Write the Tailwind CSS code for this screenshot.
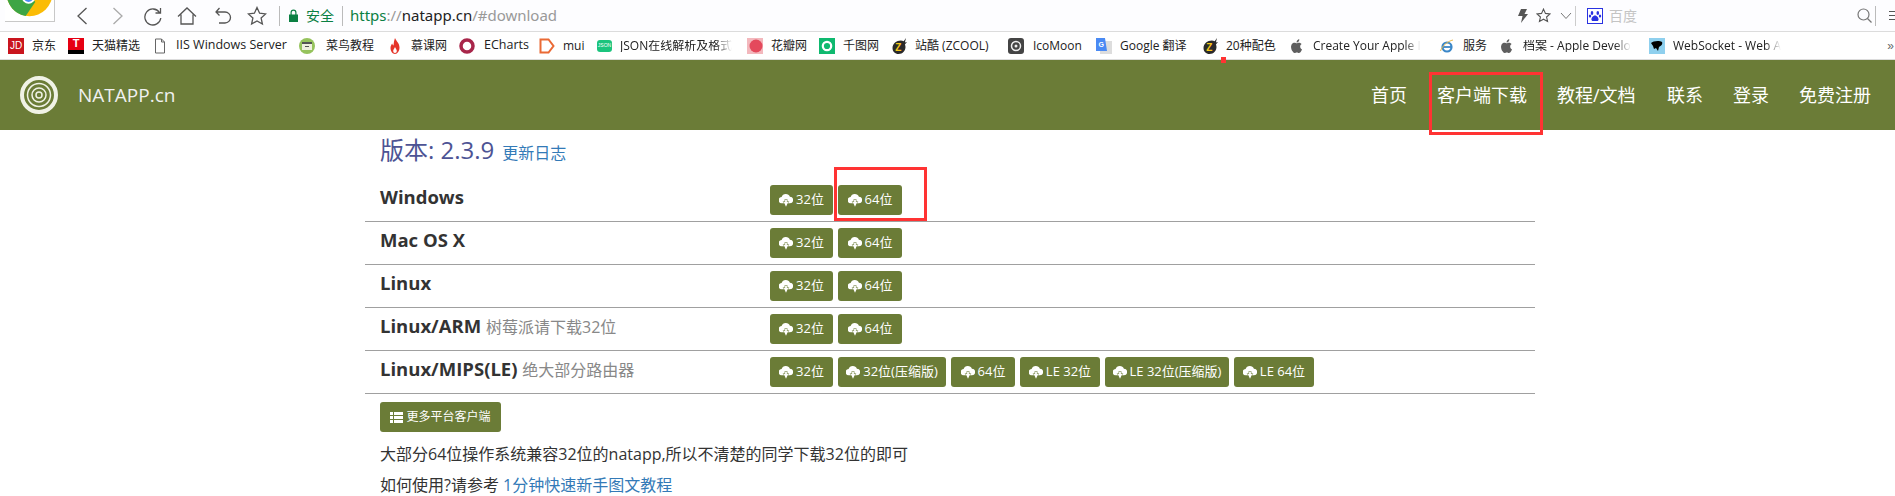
<!DOCTYPE html>
<html lang="zh-CN">
<head>
<meta charset="utf-8">
<title>NATAPP.cn</title>
<script src="https://cdn.jsdelivr.net/npm/@tailwindcss/browser@4"></script>
</head>
<body class="relative h-[496px] w-[1895px] overflow-hidden bg-white font-['Open_Sans','Noto_Sans_CJK_SC',sans-serif] text-[#333]">
<svg class="hidden">
  <symbol id="cloud" viewBox="0 0 14 14">
    <path fill="#fff" d="M3 10.200A3.100 3.100 0 0 1 2.600 4 4.400 4.400 0 0 1 10.900 3.800 3.200 3.200 0 0 1 11 10.200Z"/>
    <path fill="#6b7c37" d="M5.600 6.200h2.800v2.400h2L7 12 3.600 8.600h2Z"/>
    <path fill="#fff" d="M6.100 6.800h1.800v2.300h1.300L7 13.800 4.800 9.100h1.300Z"/>
  </symbol>
  <symbol id="apple" viewBox="0 0 16 16">
    <path fill="#5f5f5f" d="M11.200 8.400c0-1.600 1.300-2.300 1.400-2.400-.8-1.100-1.900-1.300-2.400-1.300-1-.1-2 .6-2.500.6s-1.300-.6-2.200-.6C4.300 4.700 3.200 5.400 2.600 6.400c-1.200 2.100-.3 5.200.9 6.900.6.800 1.200 1.700 2.100 1.700s1.200-.5 2.200-.5 1.300.5 2.200.5 1.500-.8 2.100-1.700c.7-1 .9-1.900.9-2-.1 0-1.800-.7-1.800-2.400ZM9.600 3.500c.5-.6.800-1.400.7-2.200-.7 0-1.500.5-2 1-.4.500-.8 1.300-.7 2.100.8.100 1.500-.4 2-.9Z"/>
  </symbol>
  <symbol id="zcool" viewBox="0 0 16 16">
    <path fill="#2a2a2a" d="M15 0 12.700 3.200C11.800 2.700 10.800 2.500 9.800 2.500 5.500 2.500 1.500 5.500 1.500 10c0 3.500 2.500 6 6 6 4.500 0 7-3.500 7-7 0-1-.2-1.800-.6-2.600L16 4l-2.100.6Z"/>
    <text x="4.300" y="13" font-size="10" font-weight="700" fill="#f5c518" font-family="Liberation Sans, sans-serif">Z</text>
  </symbol>
</svg>

<!-- browser toolbar -->
<div class="flex h-[32px] items-center border-b border-[#dcdcdc] bg-[#fdfdff]">
  <svg class="ml-[5px] h-[22px] w-[50px] shrink-0 self-start border-b border-r border-[#c8c8c8] bg-white" viewBox="0 0 50 22">
    <circle cx="25" cy="-7" r="24" fill="#fbbc05"/>
    <path fill="#3da544" d="M25-7 1-7A24 24 0 0 0 21 16.700L31 2Z"/>
    <circle cx="24" cy="-3" r="7" fill="#fff"/>
    <circle cx="24" cy="-3" r="5" fill="#4a8af4"/>
  </svg>
  <svg class="ml-[21px] h-[20px] w-[12px]" viewBox="0 0 12 20" fill="none" stroke="#555" stroke-width="1.300"><path d="M10.500 2 2 10l8.500 8"/></svg>
  <svg class="ml-[24px] h-[20px] w-[12px]" viewBox="0 0 12 20" fill="none" stroke="#aaa" stroke-width="1.300"><path d="M1.500 2 10 10l-8.500 8"/></svg>
  <svg class="ml-[19px] h-[20px] w-[20px]" viewBox="0 0 20 20" fill="none" stroke="#555" stroke-width="1.300"><path d="M16.500 6.500A8 8 0 1 0 17.800 12M17.500 2v5h-5"/></svg>
  <svg class="ml-[14px] h-[20px] w-[20px]" viewBox="0 0 20 20" fill="none" stroke="#555" stroke-width="1.300"><path d="M1 10.500 10 2l9 8.500M4 8.500V18h12V8.500"/></svg>
  <svg class="ml-[17px] h-[20px] w-[18px]" viewBox="0 0 18 20" fill="none" stroke="#555" stroke-width="1.300"><path d="M5.500 2 2 6l3.500 3.500M2 6h9a5.500 5.500 0 0 1 0 11H5"/></svg>
  <svg class="ml-[15px] h-[20px] w-[20px]" viewBox="0 0 20 20" fill="none" stroke="#555" stroke-width="1.300"><path d="m10 1.500 2.600 5.700 6.100.7-4.600 4.100 1.300 6L10 15l-5.400 3 1.300-6-4.600-4.100 6.100-.7Z"/></svg>
  <div class="ml-[12px] h-[20px] w-px bg-[#bbb]"></div>
  <svg class="ml-[9px] h-[13px] w-[9px]" viewBox="0 0 9 13"><path fill="#0b8043" d="M0 5.500h9V13H0ZM1.500 5.500V3.500a3 3 0 0 1 6 0v2H6.300V3.500a1.800 1.800 0 0 0-3.600 0v2Z"/></svg>
  <span class="ml-[8px] text-[14px] text-[#0b8043]">安全</span>
  <div class="ml-[8px] h-[20px] w-px bg-[#bbb]"></div>
  <span class="ml-[7px] font-['Noto_Sans',sans-serif] text-[15px] text-[#999]"><span class="text-[#0b8043]">https</span>://<span class="text-[#222]">natapp.cn</span>/#download</span>
  <svg class="ml-auto h-[14px] w-[10px]" viewBox="0 0 10 14"><path fill="#555" d="M3 0h6L6.500 5H10L3 14l1.500-7H0Z"/></svg>
  <svg class="ml-[8px] h-[15px] w-[15px]" viewBox="0 0 20 20" fill="none" stroke="#555" stroke-width="1.500"><path d="m10 1.500 2.600 5.700 6.100.7-4.600 4.100 1.300 6L10 15l-5.400 3 1.300-6-4.600-4.100 6.100-.7Z"/></svg>
  <svg class="ml-[9px] h-[8px] w-[12px]" viewBox="0 0 12 8" fill="none" stroke="#777"><path d="m1 1 5 5.500L11 1"/></svg>
  <div class="ml-[3px] h-[20px] w-px bg-[#ccc]"></div>
  <svg class="ml-[11px] h-[16px] w-[16px]" viewBox="0 0 16 16"><rect x=".5" y=".5" width="15" height="15" fill="#fff" stroke="#2932e1"/><g fill="#2932e1"><ellipse cx="5" cy="5" rx="1.300" ry="1.900"/><ellipse cx="10.800" cy="5" rx="1.300" ry="1.900"/><ellipse cx="3" cy="8" rx="1.200" ry="1.500"/><ellipse cx="13" cy="8" rx="1.200" ry="1.500"/><path d="M8 7.500c-2 0-4 2.500-3.500 4.500.5 1.500 2.500 1 3.500 1s3 .5 3.500-1C12 10 10 7.500 8 7.500Z"/></g></svg>
  <span class="ml-[6px] w-[248px] text-[14px] text-[#c4c4c4]">百度</span>
  <svg class="h-[15px] w-[15px]" viewBox="0 0 15 15" fill="none" stroke="#777" stroke-width="1.200"><circle cx="6.500" cy="6.500" r="5.500"/><path d="m10.500 10.500 4 4"/></svg>
  <div class="ml-[3px] h-[20px] w-px bg-[#bbb]"></div>
  <div class="ml-[13px] flex w-[6px] flex-col gap-[3px]"><div class="h-px bg-[#555]"></div><div class="h-px bg-[#555]"></div><div class="h-px bg-[#555]"></div></div>
</div>

<!-- bookmarks bar -->
<div class="flex h-[28px] items-center border-b border-[#dcdcdc] bg-white pl-[8px] text-[12px] leading-none text-[#222]">
  <div class="flex w-[60px] shrink-0 items-center gap-[8px]"><span class="flex h-[16px] w-[16px] items-center justify-center bg-[#c9151e] font-['Liberation_Sans',sans-serif] text-[10px] text-white">JD</span><span>京东</span></div>
  <div class="flex w-[84px] shrink-0 items-center gap-[8px]"><span class="flex h-[16px] w-[16px] items-start justify-center border-b-[4px] border-black bg-[#e60012] font-['Liberation_Sans',sans-serif] text-[11px] font-bold text-white">T</span><span>天猫精选</span></div>
  <div class="flex w-[147px] shrink-0 items-center gap-[8px]"><svg class="h-[16px] w-[16px]" viewBox="0 0 16 16" fill="#fff" stroke="#666"><path d="M3.500 1h6l3 3v11h-9ZM9.500 1v3h3"/></svg><span class="text-[12.5px]">IIS Windows Server</span></div>
  <div class="flex w-[88px] shrink-0 items-center gap-[11px]"><svg class="h-[16px] w-[16px]" viewBox="0 0 16 16"><circle cx="8" cy="8" r="8" fill="#96c35d"/><rect x="3" y="4" width="10" height="8" fill="#f0f0e0"/><rect x="3" y="4" width="10" height="2" fill="#555"/><rect x="6" y="8" width="4" height="1" fill="#555"/></svg><span>菜鸟教程</span></div>
  <div class="flex w-[72px] shrink-0 items-center gap-[8px]"><svg class="h-[16px] w-[16px]" viewBox="0 0 16 16"><path fill="#e5352a" d="M8 0c1 3 4.500 5 4.500 9.500C12.500 13 10.500 16 8 16s-4.500-3-4.500-6c0-2 1-3.500 1.700-4.500.2 1 .6 1.700 1.300 2C6.800 5 7 2.500 8 0Z"/><path fill="#fff" d="M8 9c.5 1.500 1.800 2.500 1.800 4 0 1-.8 2-1.800 2s-1.800-1-1.800-2c0-1.500 1.300-2.500 1.800-4Z"/></svg><span>慕课网</span></div>
  <div class="flex w-[80px] shrink-0 items-center gap-[9px]"><svg class="h-[16px] w-[16px]" viewBox="0 0 16 16" fill="none"><circle cx="8" cy="8" r="6" stroke="#a8264a" stroke-width="3.500"/></svg><span class="text-[12.5px]">ECharts</span></div>
  <div class="flex w-[58px] shrink-0 items-center gap-[8px]"><svg class="h-[16px] w-[16px]" viewBox="0 0 16 16" fill="none" stroke="#ea6a35" stroke-width="2"><path d="M1.500 1.500h8L14.500 8l-5 6.500h-8Z"/></svg><span>mui</span></div>
  <div class="flex w-[150px] shrink-0 items-center gap-[8px]"><span class="flex h-[12px] w-[15px] items-center justify-center rounded-[3px] bg-[#1bc47d] font-['Liberation_Sans',sans-serif] text-[5px] text-white">JSON</span><span class="whitespace-nowrap [mask-image:linear-gradient(to_right,black_85%,transparent)]">JSON在线解析及格式</span></div>
  <div class="flex w-[72px] shrink-0 items-center gap-[8px]"><svg class="h-[16px] w-[16px]" viewBox="0 0 16 16"><rect width="16" height="16" fill="#f3b8bd"/><circle cx="9" cy="8" r="6.500" fill="#e4495c"/></svg><span>花瓣网</span></div>
  <div class="flex w-[72px] shrink-0 items-center gap-[8px]"><svg class="h-[16px] w-[16px]" viewBox="0 0 16 16" fill="none"><rect width="16" height="16" fill="#0fb96f"/><circle cx="8" cy="8" r="4.200" stroke="#fff" stroke-width="2.200"/></svg><span>千图网</span></div>
  <div class="flex w-[117px] shrink-0 items-center gap-[8px]"><svg class="h-[16px] w-[16px]"><use href="#zcool"/></svg><span>站酷 (ZCOOL)</span></div>
  <div class="flex w-[88px] shrink-0 items-center gap-[9px]"><svg class="h-[16px] w-[16px]" viewBox="0 0 16 16" fill="none"><rect width="16" height="16" rx="3" fill="#444"/><circle cx="8" cy="8" r="4.500" stroke="#eee" stroke-width="1.500"/><circle cx="8" cy="8" r="1.500" fill="#eee"/></svg><span>IcoMoon</span></div>
  <div class="flex w-[106px] shrink-0 items-center gap-[8px]"><svg class="h-[16px] w-[16px]" viewBox="0 0 16 16"><rect x="4" y="3" width="12" height="13" fill="#ddd"/><path fill="#4a8af4" d="M0 0h9l2 13H0Z"/><text x="2.500" y="9" font-size="7" font-weight="700" fill="#fff" font-family="Liberation Sans, sans-serif">G</text></svg><span>Google 翻译</span></div>
  <div class="flex w-[87px] shrink-0 items-center gap-[8px]"><svg class="h-[16px] w-[16px]"><use href="#zcool"/></svg><span>20种配色</span></div>
  <div class="flex w-[150px] shrink-0 items-center gap-[8px]"><svg class="h-[16px] w-[16px]"><use href="#apple"/></svg><span class="whitespace-nowrap [mask-image:linear-gradient(to_right,black_85%,transparent)]">Create Your Apple I</span></div>
  <div class="flex w-[60px] shrink-0 items-center gap-[8px]"><svg class="h-[16px] w-[16px]" viewBox="0 0 16 16" fill="none"><circle cx="8" cy="9" r="4.500" stroke="#3b87c8" stroke-width="2.200"/><path stroke="#3b87c8" stroke-width="1.800" d="M4 9h8"/><path stroke="#e6b84a" d="M1.500 13C3 8 9 3 14 2"/></svg><span>服务</span></div>
  <div class="flex w-[150px] shrink-0 items-center gap-[8px]"><svg class="h-[16px] w-[16px]"><use href="#apple"/></svg><span class="whitespace-nowrap [mask-image:linear-gradient(to_right,black_85%,transparent)]">档案 - Apple Develo</span></div>
  <div class="flex w-[150px] shrink-0 items-center gap-[8px]"><svg class="h-[16px] w-[16px]" viewBox="0 0 16 16"><rect width="16" height="16" fill="#8fd0ee"/><path d="M2 5c2-2 8-3 11-1 1 2-1 4-3 5l-1 4-2-3-2 1-1-3Z"/></svg><span class="whitespace-nowrap [mask-image:linear-gradient(to_right,black_85%,transparent)]">WebSocket - Web A</span></div>
  <span class="ml-auto pr-[1px] font-['Liberation_Sans',sans-serif] text-[12px] text-[#666]">»</span>
</div>

<!-- site nav -->
<nav class="flex h-[70px] items-center bg-[#6b7c37] pr-[24px] text-white">
  <svg class="ml-[20px] h-[38px] w-[38px]" viewBox="0 0 38 38" fill="none">
    <circle cx="19" cy="19" r="17" stroke="#f0f2e6" stroke-width="4"/>
    <circle cx="19" cy="19" r="11.500" stroke="#f0f2e6" stroke-width="1.500"/>
    <circle cx="19" cy="19" r="7" stroke="#f0f2e6" stroke-width="1.500"/>
    <circle cx="19" cy="19" r="3" stroke="#f0f2e6" stroke-width="1.500"/>
  </svg>
  <a class="ml-[20px] text-[19px] text-[#f0f0f0]">NATAPP.cn</a>
  <div class="ml-auto flex gap-[30px] text-[18px]">
    <a>首页</a>
    <a>客户端下载</a>
    <a class="w-[80px]">教程/文档</a>
    <a>联系</a>
    <a>登录</a>
    <a>免费注册</a>
  </div>
</nav>

<!-- download panel -->
<main class="ml-[365px] w-[1170px]">
  <div class="flex h-[49px] items-baseline gap-[8px] pl-[15px] pt-[2px]">
    <h1 class="text-[24px] font-normal text-[#4d5394]">版本: 2.3.9</h1>
    <a class="text-[16px] text-[#337ab7]">更新日志</a>
  </div>

  <div class="flex h-[43px] border-b border-[#a0a0a0]">
    <div class="w-[405px] shrink-0 pl-[15px] pt-[5px] text-[18.5px] leading-[26px] font-bold">Windows</div>
    <div class="flex gap-[5px] pt-[6px]">
      <a class="flex h-[30px] w-[63px] items-center justify-center gap-[3px] rounded-[3px] bg-[#6b7c37] text-[13px] text-white"><svg class="h-[14px] w-[14px]"><use href="#cloud"/></svg>32位</a>
      <a class="flex h-[30px] w-[64px] items-center justify-center gap-[3px] rounded-[3px] bg-[#6b7c37] text-[13px] text-white"><svg class="h-[14px] w-[14px]"><use href="#cloud"/></svg>64位</a>
    </div>
  </div>
  <div class="flex h-[43px] border-b border-[#a0a0a0]">
    <div class="w-[405px] shrink-0 pl-[15px] pt-[5px] text-[18.5px] leading-[26px] font-bold">Mac OS X</div>
    <div class="flex gap-[5px] pt-[6px]">
      <a class="flex h-[30px] w-[63px] items-center justify-center gap-[3px] rounded-[3px] bg-[#6b7c37] text-[13px] text-white"><svg class="h-[14px] w-[14px]"><use href="#cloud"/></svg>32位</a>
      <a class="flex h-[30px] w-[64px] items-center justify-center gap-[3px] rounded-[3px] bg-[#6b7c37] text-[13px] text-white"><svg class="h-[14px] w-[14px]"><use href="#cloud"/></svg>64位</a>
    </div>
  </div>
  <div class="flex h-[43px] border-b border-[#a0a0a0]">
    <div class="w-[405px] shrink-0 pl-[15px] pt-[5px] text-[18.5px] leading-[26px] font-bold">Linux</div>
    <div class="flex gap-[5px] pt-[6px]">
      <a class="flex h-[30px] w-[63px] items-center justify-center gap-[3px] rounded-[3px] bg-[#6b7c37] text-[13px] text-white"><svg class="h-[14px] w-[14px]"><use href="#cloud"/></svg>32位</a>
      <a class="flex h-[30px] w-[64px] items-center justify-center gap-[3px] rounded-[3px] bg-[#6b7c37] text-[13px] text-white"><svg class="h-[14px] w-[14px]"><use href="#cloud"/></svg>64位</a>
    </div>
  </div>
  <div class="flex h-[43px] border-b border-[#a0a0a0]">
    <div class="w-[405px] shrink-0 pl-[15px] pt-[5px] text-[18.5px] leading-[26px] font-bold">Linux/ARM <small class="text-[16px] font-normal text-[#888]">树莓派请下载32位</small></div>
    <div class="flex gap-[5px] pt-[6px]">
      <a class="flex h-[30px] w-[63px] items-center justify-center gap-[3px] rounded-[3px] bg-[#6b7c37] text-[13px] text-white"><svg class="h-[14px] w-[14px]"><use href="#cloud"/></svg>32位</a>
      <a class="flex h-[30px] w-[64px] items-center justify-center gap-[3px] rounded-[3px] bg-[#6b7c37] text-[13px] text-white"><svg class="h-[14px] w-[14px]"><use href="#cloud"/></svg>64位</a>
    </div>
  </div>
  <div class="flex h-[43px] border-b border-[#a0a0a0]">
    <div class="w-[405px] shrink-0 pl-[15px] pt-[5px] text-[18.5px] leading-[26px] font-bold">Linux/MIPS(LE) <small class="text-[16px] font-normal text-[#888]">绝大部分路由器</small></div>
    <div class="flex gap-[5px] pt-[6px]">
      <a class="flex h-[30px] w-[63px] items-center justify-center gap-[3px] rounded-[3px] bg-[#6b7c37] text-[13px] text-white"><svg class="h-[14px] w-[14px]"><use href="#cloud"/></svg>32位</a>
      <a class="flex h-[30px] w-[108px] items-center justify-center gap-[3px] rounded-[3px] bg-[#6b7c37] text-[13px] text-white"><svg class="h-[14px] w-[14px]"><use href="#cloud"/></svg>32位(压缩版)</a>
      <a class="flex h-[30px] w-[64px] items-center justify-center gap-[3px] rounded-[3px] bg-[#6b7c37] text-[13px] text-white"><svg class="h-[14px] w-[14px]"><use href="#cloud"/></svg>64位</a>
      <a class="flex h-[30px] w-[80px] items-center justify-center gap-[3px] rounded-[3px] bg-[#6b7c37] text-[13px] text-white"><svg class="h-[14px] w-[14px]"><use href="#cloud"/></svg>LE 32位</a>
      <a class="flex h-[30px] w-[124px] items-center justify-center gap-[3px] rounded-[3px] bg-[#6b7c37] text-[13px] text-white"><svg class="h-[14px] w-[14px]"><use href="#cloud"/></svg>LE 32位(压缩版)</a>
      <a class="flex h-[30px] w-[80px] items-center justify-center gap-[3px] rounded-[3px] bg-[#6b7c37] text-[13px] text-white"><svg class="h-[14px] w-[14px]"><use href="#cloud"/></svg>LE 64位</a>
    </div>
  </div>

  <div class="pl-[15px] pt-[8px]">
    <a class="flex h-[30px] w-[121px] items-center justify-center gap-[3px] rounded-[3px] bg-[#6b7c37] text-[12px] text-white">
      <svg class="h-[11px] w-[13px]" viewBox="0 0 13 11" fill="#fff"><path d="M0 0h3v3H0ZM4 0h9v3H4ZM0 4h3v3H0ZM4 4h9v3H4ZM0 8h3v3H0ZM4 8h9v3H4Z"/></svg>更多平台客户端
    </a>
    <p class="mt-[9px] text-[16px] leading-[26px]">大部分64位操作系统兼容32位的natapp,所以不清楚的同学下载32位的即可</p>
    <p class="mt-[5px] text-[16px] leading-[26px]">如何使用?请参考 <a class="text-[#337ab7]">1分钟快速新手图文教程</a></p>
  </div>
</main>

<!-- red annotation boxes drawn over the screenshot -->
<div class="absolute left-[1429px] top-[72px] h-[63px] w-[114px] border-[3px] border-[#f33]"></div>
<div class="absolute left-[834px] top-[167px] h-[54px] w-[93px] border-[3px] border-[#f33]"></div>
<div class="absolute left-[1221px] top-[57px] h-[6px] w-[5px] bg-[#f33]"></div>
</body>
</html>
